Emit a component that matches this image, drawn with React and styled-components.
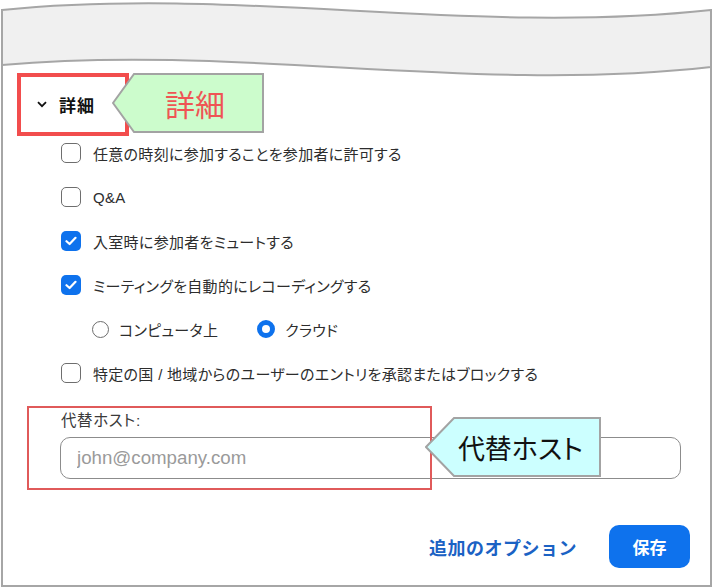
import React, { useState } from "react";
import styled, { createGlobalStyle } from "styled-components";

const GlobalStyle = createGlobalStyle`
  html, body {
    margin: 0;
    background: #fff;
  }
  body {
    font-family: "Liberation Sans", "Noto Sans CJK JP", sans-serif;
    color: #232333;
  }
`;

const Page = styled.div`
  width: 713px;
  height: 588px;
  overflow: hidden;
`;

const Wave = styled.svg`
  display: block;
  overflow: visible;
`;

const Panel = styled.div`
  position: relative;
  box-sizing: border-box;
  height: 515px;
  margin: 0 1px;
  border: 2px solid #a6a6a6;
  border-top: none;
  display: flex;
  flex-direction: column;
`;

const HeaderBox = styled.div`
  box-sizing: border-box;
  width: 112px;
  height: 63px;
  margin: 1px 0 0 14px;
  padding-left: 16px;
  border: 4px solid #f24d4d;
  display: flex;
  align-items: center;
  gap: 12px;
`;

const HeaderTitle = styled.span`
  font-family: "Noto Sans CJK JP", sans-serif;
  font-size: 17px;
  font-weight: 700;
  letter-spacing: 1px;
  color: #111;
`;

const OptionList = styled.div`
  display: flex;
  flex-direction: column;
  gap: 20px;
  margin-top: 5px;
  padding-left: 58px;
`;

const Row = styled.label`
  display: flex;
  align-items: center;
  height: 24px;
  gap: 12px;
  padding-left: ${(p) => (p.$indent ? "31px" : "0")};
  font-size: 15px;
  letter-spacing: 0.3px;
  font-feature-settings: "palt";
  color: #2d2d2d;
`;

const Box = styled.span`
  box-sizing: border-box;
  width: 20px;
  height: 20px;
  border-radius: 5px;
  border: ${(p) => (p.$checked ? "none" : "1.5px solid #6e6e6e")};
  background: ${(p) => (p.$checked ? "#0e72ed" : "#fff")};
  display: flex;
  align-items: center;
  justify-content: center;
  flex-shrink: 0;
`;

const RadioGroup = styled.div`
  display: flex;
  align-items: center;
  gap: 39px;
`;

const RadioOption = styled.span`
  display: flex;
  align-items: center;
  gap: 10px;
`;

const RadioDot = styled.span`
  box-sizing: border-box;
  width: ${(p) => (p.$on ? "18px" : "17px")};
  height: ${(p) => (p.$on ? "18px" : "17px")};
  border-radius: 50%;
  border: ${(p) => (p.$on ? "5px solid #0e72ed" : "1.5px solid #6e6e6e")};
  background: #fff;
`;

const HostSection = styled.div`
  display: flex;
  flex-direction: column;
  margin-top: 26px;
  padding-left: 57px;
`;

const HostLabel = styled.span`
  height: 20px;
  line-height: 20px;
  padding-left: 1px;
  font-size: 15.5px;
  letter-spacing: 0.6px;
  font-feature-settings: "palt";
  color: #3a3a3a;
`;

const HostInput = styled.input`
  box-sizing: border-box;
  width: 621px;
  height: 42px;
  margin-top: 6px;
  padding: 0 16px;
  border: 1.5px solid #8c8c8c;
  border-radius: 10px;
  font-family: "Liberation Sans", sans-serif;
  font-size: 18.7px;
  color: #222;
  outline: none;
  &::placeholder {
    color: #9a9a9a;
  }
`;

const Footer = styled.div`
  display: flex;
  justify-content: flex-end;
  align-items: center;
  gap: 32px;
  margin-top: 46px;
  padding-right: 20px;
`;

const MoreLink = styled.a`
  font-family: "Noto Sans CJK JP", sans-serif;
  font-size: 18px;
  font-weight: 700;
  letter-spacing: 0.5px;
  color: #1b62c4;
  text-decoration: none;
  cursor: pointer;
`;

const SaveButton = styled.button`
  width: 81px;
  height: 43px;
  border: none;
  border-radius: 10px;
  background: #0e72ed;
  color: #fff;
  font-family: "Noto Sans CJK JP", sans-serif;
  font-size: 17px;
  font-weight: 700;
  cursor: pointer;
`;

const Callout = styled.div`
  position: absolute;
  left: ${(p) => p.$left}px;
  top: ${(p) => p.$top}px;
  width: ${(p) => p.$width}px;
  height: 60px;
  box-sizing: border-box;
  padding-left: ${(p) => p.$tip}px;
  padding-right: ${(p) => p.$shift}px;
  display: flex;
  align-items: center;
  justify-content: center;
`;

const CalloutShape = styled.svg`
  position: absolute;
  inset: 0;
`;

const CalloutText = styled.span`
  position: relative;
  font-family: "Noto Sans CJK JP", sans-serif;
  font-size: ${(p) => p.$size}px;
  font-feature-settings: "palt";
  color: ${(p) => p.$color};
  line-height: 1;
`;

const Highlight = styled.div`
  position: absolute;
  left: 24px;
  top: 334px;
  width: 405px;
  height: 84px;
  box-sizing: border-box;
  border: 2px solid #e05a5a;
  pointer-events: none;
`;

function CalloutBubble({ left, top, width, tip, shift, fill, color, size, children }) {
  const w = width - 1;
  return (
    <Callout $left={left} $top={top} $width={width} $tip={tip} $shift={shift}>
      <CalloutShape width={width} height={60}>
        <polygon
          points={`1,30 ${tip},1 ${w},1 ${w},59 ${tip},59`}
          fill={fill}
          stroke="#a3a3a3"
          strokeWidth="2"
        />
      </CalloutShape>
      <CalloutText $color={color} $size={size}>
        {children}
      </CalloutText>
    </Callout>
  );
}

function Check({ checked }) {
  return (
    <Box $checked={checked}>
      {checked && (
        <svg width="12" height="10" viewBox="0 0 12 10">
          <path
            d="M1.5 5.2 L4.6 8 L10.5 1.8"
            fill="none"
            stroke="#fff"
            strokeWidth="2.2"
            strokeLinecap="round"
            strokeLinejoin="round"
          />
        </svg>
      )}
    </Box>
  );
}

const options = [
  { id: "anytime", label: "任意の時刻に参加することを参加者に許可する", checked: false },
  { id: "qa", label: "Q&A", checked: false },
  { id: "mute", label: "入室時に参加者をミュートする", checked: true },
  { id: "record", label: "ミーティングを自動的にレコーディングする", checked: true },
];

export default function App() {
  const [where, setWhere] = useState("cloud");

  return (
    <Page>
      <GlobalStyle />
      <Wave width="713" height="72">
        <path
          d="M2 10 C240 -14 470 36 711 10 L711 67 C470 94 240 44 2 65 Z"
          fill="#f0f0f0"
          stroke="#a6a6a6"
          strokeWidth="2"
        />
        <path d="M2 65 V72 M711 67 V72" stroke="#a6a6a6" strokeWidth="2" />
      </Wave>
      <Panel>
        <HeaderBox>
          <svg width="10" height="7" viewBox="0 0 10 7">
            <path
              d="M1 1.2 L5 5.2 L9 1.2"
              fill="none"
              stroke="#111"
              strokeWidth="1.8"
            />
          </svg>
          <HeaderTitle>詳細</HeaderTitle>
        </HeaderBox>

        <OptionList>
          {options.map((o) => (
            <Row key={o.id}>
              <Check checked={o.checked} />
              {o.label}
            </Row>
          ))}
          <Row as="div" $indent>
            <RadioGroup>
              <RadioOption onClick={() => setWhere("local")}>
                <RadioDot $on={where === "local"} />
                コンピュータ上
              </RadioOption>
              <RadioOption onClick={() => setWhere("cloud")}>
                <RadioDot $on={where === "cloud"} />
                クラウド
              </RadioOption>
            </RadioGroup>
          </Row>
          <Row>
            <Check checked={false} />
            特定の国 / 地域からのユーザーのエントリを承認またはブロックする
          </Row>
        </OptionList>

        <HostSection>
          <HostLabel>代替ホスト:</HostLabel>
          <HostInput placeholder="john@company.com" />
        </HostSection>

        <Footer>
          <MoreLink>追加のオプション</MoreLink>
          <SaveButton>保存</SaveButton>
        </Footer>

        <CalloutBubble left={109} top={1} width={152} tip={22} shift={8} fill="#ccfccc" color="#ef5454" size={30}>
          詳細
        </CalloutBubble>
        <Highlight />
        <CalloutBubble left={422} top={345} width={176} tip={29} shift={14} fill="#ccffff" color="#111" size={27}>
          代替ホスト
        </CalloutBubble>
      </Panel>
    </Page>
  );
}
